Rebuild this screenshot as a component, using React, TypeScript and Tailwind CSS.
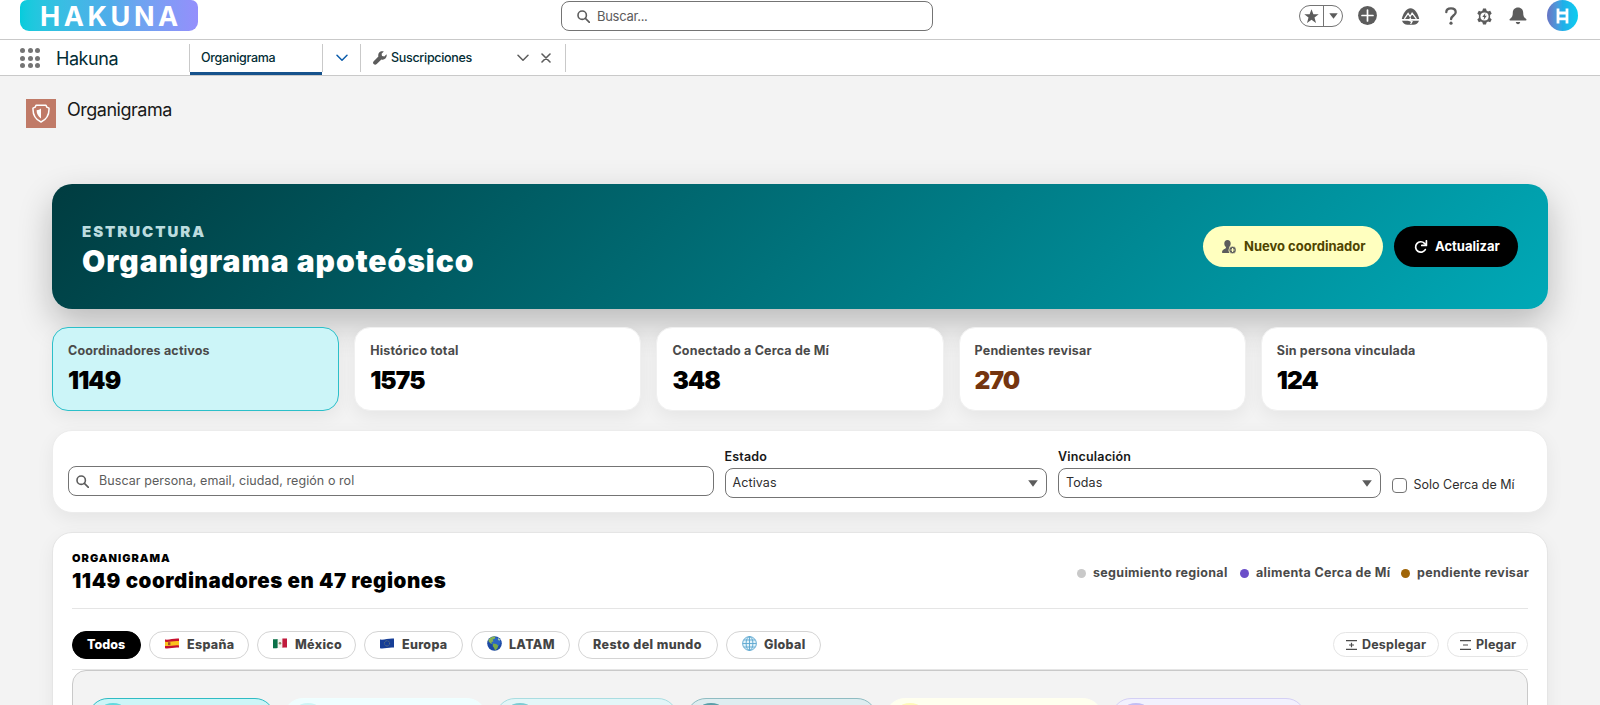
import type { ReactNode } from 'react';
import clsx from 'clsx';

const stats = [
    { label: 'Coordinadores activos', value: '1149', active: true },
    { label: 'Histórico total', value: '1575' },
    { label: 'Conectado a Cerca de Mí', value: '348' },
    { label: 'Pendientes revisar', value: '270', warn: true },
    { label: 'Sin persona vinculada', value: '124' },
];

const legend = [
    { label: 'seguimiento regional', dot: 'bg-[#c9c9c9]', width: 'w-[135px]' },
    { label: 'alimenta Cerca de Mí', dot: 'bg-[#6b4fc9]', width: 'w-[133px]' },
    { label: 'pendiente revisar', dot: 'bg-[#a06508]', width: 'w-[111px]' },
];

const people = [
    { card: 'w-[187px] border-[#2fbcc4] bg-[#ccf5f7]', avatar: 'bg-[#62d9de]' },
    { card: 'w-[204px] border-[#f0ffff] bg-[#effeff]', avatar: 'bg-[#cdf5f6]' },
    { card: 'w-[183px] border-[#a9dde1] bg-[#e3f6f8]', avatar: 'bg-[#7ccbd3]' },
    { card: 'w-[191px] border-[#8fbcc2] bg-[#deedf0]', avatar: 'bg-[#5a9ea8]' },
    { card: 'w-[218px] border-[#fffff0] bg-[#ffffee]', avatar: 'bg-[#fff9b8]' },
    { card: 'w-[195px] border-[#d4d0f5] bg-[#f2f1fe]', avatar: 'bg-[#c3bdf3]' },
];

function SearchIcon({ className }: { className?: string }) {
    return (
        <svg className={className} width="13" height="13" viewBox="0 0 13 13" fill="none" stroke="#5c5c5c" strokeWidth="1.6">
            <circle cx="5.2" cy="5.2" r="4.2" />
            <path d="M8.4 8.4l4 4" strokeLinecap="round" />
        </svg>
    );
}

function Chevron({ color }: { color: string }) {
    return (
        <svg width="12" height="8" viewBox="0 0 12 8" fill="none" stroke={color} strokeWidth="1.5">
            <path d="M1 1.3l5 5 5-5" strokeLinecap="round" strokeLinejoin="round" />
        </svg>
    );
}

function FlagSpain() {
    return (
        <svg width="14" height="11" viewBox="0 0 14 11">
            <path d="M0 1.5C4 2.2 9 0 14 .6v9C9 9 4 11 0 10.2z" fill="#c8102e" />
            <path d="M0 3.8C4 4.4 9 2.4 14 3v4.4C9 6.8 4 8.6 0 8z" fill="#fbc21c" />
            <path d="M3 4.2h2.4v3H3z" fill="#a8492a" />
        </svg>
    );
}

function FlagMexico() {
    return (
        <svg width="14" height="11" viewBox="0 0 14 11">
            <path d="M0 1.2C4 1.8 9 0 14 .6v9C9 9 4 11 0 10.2z" fill="#f4f2ee" />
            <path d="M0 1.2c1.6.2 3 .1 4.6-.2v9.1c-1.6.2-3 .3-4.6.1z" fill="#0b7048" />
            <path d="M9.4.5C11 .3 12.5.4 14 .6v9c-1.5-.2-3-.1-4.6.1z" fill="#c01a3c" />
            <circle cx="7" cy="5.3" r="1.3" fill="#8a8460" />
        </svg>
    );
}

function FlagEurope() {
    return (
        <svg width="14" height="11" viewBox="0 0 14 11">
            <path d="M0 1.5C4 2.2 9 0 14 .6v9C9 9 4 11 0 10.2z" fill="#173e96" />
            <circle cx="7" cy="5.4" r="2.6" fill="none" stroke="#7f8a6c" strokeWidth=".8" strokeDasharray=".8 .6" />
        </svg>
    );
}

function EarthIcon() {
    return (
        <svg width="15" height="15" viewBox="0 0 15 15">
            <circle cx="7.5" cy="7.5" r="7.3" fill="#1c49a3" />
            <circle cx="9" cy="6" r="4.5" fill="#2c66c4" />
            <path d="M2 3.3C3.6 1.2 6 .3 8.5.7l-.8 2.1-2 .8.7 1.9-2 .6.8 1.7-1.7-.3L1.3 5z" fill="#86b354" />
            <path d="M6.2 7.6l3.1.4 2.1 1.7-1.1 2.7-2.2 2-1-2.5-1.4-2z" fill="#79a84a" />
            <path d="M11.2 2l2 1.7-.9 1-1.3-1z" fill="#b8d89c" />
        </svg>
    );
}

function GlobeIcon() {
    return (
        <svg width="15" height="15" viewBox="0 0 15 15" fill="none" stroke="#5aa6cf" strokeWidth=".9">
            <circle cx="7.5" cy="7.5" r="6.9" fill="#e3f3fa" />
            <ellipse cx="7.5" cy="7.5" rx="3.4" ry="6.9" />
            <path d="M7.5.6v13.8M.6 7.5h13.8M1.8 4h11.4M1.8 11h11.4" />
        </svg>
    );
}

const regions: { label: string; icon?: ReactNode; active?: boolean; width: string }[] = [
    { label: 'Todos', active: true, width: 'w-[69px] pl-[14px]' },
    { label: 'España', icon: <FlagSpain />, width: 'w-[100px] pl-[15px]' },
    { label: 'México', icon: <FlagMexico />, width: 'w-[99px] pl-[15px]' },
    { label: 'Europa', icon: <FlagEurope />, width: 'w-[99px] pl-[15px]' },
    { label: 'LATAM', icon: <EarthIcon />, width: 'w-[99px] pl-[15px]' },
    { label: 'Resto del mundo', width: 'w-[140px] pl-[14px] tracking-[0.4px]' },
    { label: 'Global', icon: <GlobeIcon />, width: 'w-[95px] pl-[15px]' },
];

function TopBar() {
    return (
        <div className="flex h-10 items-start border-b border-[#c9c9c9] bg-white">
            <div className="ml-5 flex h-[31px] w-[178px] items-center rounded-b-[9px] rounded-t-[7px] bg-linear-to-r from-[#04ccdc] via-[#4fadea] to-[#948ffc] pt-px pl-5">
                <span className="text-[27px] leading-none font-bold tracking-[3.6px] text-white">HAKUNA</span>
            </div>

            <div className="mt-px ml-[363px] flex h-[30px] w-[372px] items-center rounded-lg border border-[#747474] pl-[15px]">
                <SearchIcon className="mt-px" />
                <span className="ml-[7px] pt-px text-[13px] tracking-[-0.3px] text-[#5c5c5c]">Buscar...</span>
            </div>

            <div className="ml-[366px] flex h-8 items-center">
                <div className="flex h-[22px] w-11 items-center rounded-full border border-[#747474]">
                    <div className="flex h-full w-6 items-center justify-center border-r border-[#747474]">
                        <svg width="15" height="15" viewBox="0 0 15 15" fill="#5c5c5c">
                            <path d="M7.5.3l1.9 5h5.3l-4.2 3.3 1.5 5.3-4.5-3.2-4.5 3.2 1.5-5.3L.3 5.3h5.3z" />
                        </svg>
                    </div>
                    <svg className="ml-[5px]" width="9" height="6" viewBox="0 0 9 6" fill="#5c5c5c">
                        <path d="M.3.3h8.4L4.5 5.7z" />
                    </svg>
                </div>

                {/* crear */}
                <svg className="-mt-[2px] ml-[15px]" width="19" height="19" viewBox="0 0 19 19">
                    <circle cx="9.5" cy="9.5" r="9.4" fill="#5c5c5c" />
                    <path d="M9.5 4v11M4 9.5h11" stroke="#fff" strokeWidth="1.7" strokeLinecap="round" />
                </svg>

                {/* trailhead */}
                <svg className="ml-6" width="19" height="17" viewBox="0 0 19 17">
                    <path d="M.8 11C1.8 6 5.200.3 9.500.3S17.200 6 18.200 11z" fill="#5c5c5c" />
                    <path d="M1 12.800h17c-1 2.600-3 3.900-5.500 3.900h-6C4 16.700 2 15.400 1 12.800z" fill="#5c5c5c" />
                    <path d="M3.400 10.800l3.700-5.300 2 3 2-3.300 4.300 5.600M9.800 9.800l-1.800 2.400 3 1.400-1.400 2.400" fill="none" stroke="#fff" strokeWidth="1.300" />
                </svg>

                {/* ayuda */}
                <svg className="ml-[25px]" width="12" height="18" viewBox="0 0 12 18">
                    <path d="M1.300 5.200C1.300 2.700 3.300 1.300 6 1.300s4.700 1.500 4.700 3.900c0 3.300-4.600 3.400-4.600 7" fill="none" stroke="#5c5c5c" strokeWidth="2.300" strokeLinecap="round" />
                    <circle cx="6" cy="16.200" r="1.600" fill="#5c5c5c" />
                </svg>

                {/* configuración */}
                <svg className="ml-[19px] mt-px" width="17" height="17" viewBox="0 0 17 17">
                    <path
                        d="M7 .4h3l.5 2.200 1.500.9 2.200-.7 1.500 2.600-1.600 1.500v3.200l1.600 1.500-1.500 2.600-2.200-.7-1.500.9-.5 2.200H7l-.5-2.200-1.500-.9-2.200.7-1.500-2.600 1.600-1.500V6.900L1.300 5.400l1.500-2.600 2.200.7 1.500-.9z"
                        fill="#5c5c5c"
                    />
                    <circle cx="8.500" cy="8.500" r="4.100" fill="#fff" />
                    <path d="M9.400 5L6.300 9.100h1.900L7.600 12l3.200-4.200H8.900z" fill="#5c5c5c" />
                </svg>

                {/* notificaciones */}
                <svg className="ml-4" width="18" height="18" viewBox="0 0 18 18" fill="#5c5c5c">
                    <path d="M9 .5c3.300 0 5.200 2.300 5.200 5.200 0 3.200.7 4.800 2.900 6.200.8.600.5 1.600-.4 1.600H1.300c-.9 0-1.200-1-.4-1.600 2.200-1.400 2.900-3 2.900-6.200C3.800 2.800 5.700.5 9 .5z" />
                    <path d="M6.800 15h4.400c-.2 1.400-1 2.200-2.200 2.200S7 16.400 6.800 15z" />
                </svg>

                <div className="-mt-px ml-5 flex size-[31px] items-center justify-center rounded-full bg-linear-to-r from-[#6674c4] via-[#20aee8] to-[#08cdf0]">
                    <svg width="13" height="16" viewBox="0 0 13 16" stroke="#fff" strokeWidth="2.800" fill="none">
                        <path d="M2 .5v15M11 .5v15M2 5h9M2 10.800h9" />
                    </svg>
                </div>
            </div>
        </div>
    );
}

function TabBar() {
    return (
        <div className="flex h-9 items-start border-b border-[#c9c9c9] bg-white text-[#03234d]">
            <div className="mt-2 ml-5 grid w-5 grid-cols-3 gap-[2.5px]">
                {Array.from({ length: 9 }, (_, i) => (
                    <span key={i} className="size-[5px] rounded-full bg-[#747474]" />
                ))}
            </div>
            <span className="mt-1.5 ml-4 w-[133px] text-[18px] leading-[26px] tracking-[-0.45px] text-[#032d35]">
                Hakuna
            </span>

            <div className="mt-1 h-[30px] w-[134px]">
                <div className="flex h-7 items-center border-x border-[#c9c9c9] pl-[11px]">
                    <span className="pt-px text-[12.5px] font-medium tracking-[-0.28px] text-[#032d35]">Organigrama</span>
                </div>
                <div className="mx-px h-[2.5px] bg-[#16528c]" />
            </div>
            <div className="mt-1 flex h-[28px] w-[38px] items-center justify-center border-r border-[#c9c9c9]">
                <Chevron color="#0b5cab" />
            </div>

            <div className="mt-1 flex h-[28px] w-[205px] items-center border-r border-[#c9c9c9] pl-3">
                <svg width="14" height="14" viewBox="0 0 14 14" fill="#5c5c5c">
                    <path d="M13.500 3.200L11.300 5.400 9 5 8.600 2.700 10.800.5C9.200-.1 7.300.2 6.200 1.500c-1 1.200-1.200 2.600-.8 3.900L.7 10.200c-.9.900-.9 2 0 2.900s2.100.9 3 0l4.700-4.700c1.400.5 2.900.2 4-.9 1.200-1.200 1.600-2.800 1.100-4.300z" />
                </svg>
                <span className="ml-1 pt-px text-[12.5px] font-medium tracking-[-0.3px] text-[#032d35]">Suscripciones</span>
                <div className="mr-[14px] ml-auto flex items-center gap-[12px]">
                    <Chevron color="#5c5c5c" />
                    <svg width="10" height="10" viewBox="0 0 10 10" stroke="#5c5c5c" strokeWidth="1.600" strokeLinecap="round">
                        <path d="M1 1l8 8M9 1L1 9" />
                    </svg>
                </div>
            </div>
        </div>
    );
}

function Hero() {
    return (
        <section className="flex h-[125px] items-center justify-between rounded-[20px] bg-[linear-gradient(135deg,#003c40_0%,#00a9b7_100%)] px-[30px] shadow-[0_14px_34px_rgba(0,0,0,0.24)]">
            <div className="pt-[8px]">
                <p className="text-[15px] leading-[18px] font-black tracking-[1.950px] text-[#bcdcdf]">ESTRUCTURA</p>
                <h1 className="mt-[2px] text-[30px] leading-[36px] font-black tracking-[0.990px] text-white">
                    Organigrama apoteósico
                </h1>
            </div>
            <div className="flex gap-[11px] text-[13px] font-bold">
                <button className="flex h-[41px] w-[180px] items-center rounded-full bg-[#ffffbf] pl-[19px] text-[#4f4400]">
                    <svg width="14" height="14" viewBox="0 0 14 14">
                        <path d="M5.500 0C7.500 0 8.700 1.500 8.700 3.400c0 1.400-.6 2.600-1.300 3.300-.3.500-.1 1 .3 1.200-1.200 1.400-1.300 3.500-.3 5.100H1C.3 13 0 12.600 0 12c0-2.300 2.200-2.800 3.500-3.600.6-.4.6-1.200.2-1.700C2.900 6 2.300 4.800 2.300 3.400 2.300 1.500 3.500 0 5.500 0z" fill="#5c5c5c" />
                        <circle cx="10.600" cy="10" r="3.700" fill="#5c5c5c" stroke="#ffffbf" strokeWidth=".7" />
                        <path d="M10.600 8v4M8.600 10h4" stroke="#ffffbf" strokeWidth="1.200" />
                    </svg>
                    <span className="ml-2">Nuevo coordinador</span>
                </button>
                <button className="flex h-[41px] w-[124px] items-center rounded-full bg-black pl-5 text-white">
                    <svg width="14" height="14" viewBox="0 0 14 14" fill="none" stroke="#fff" strokeWidth="1.700">
                        <path d="M11.300 9.600A5.200 5.200 0 1 1 10.500 3.300l1.300 1.300" strokeLinecap="round" />
                        <path d="M12.400.8v4.600H7.800" strokeLinecap="round" strokeLinejoin="round" />
                    </svg>
                    <span className="ml-[7px]">Actualizar</span>
                </button>
            </div>
        </section>
    );
}

function Filters() {
    return (
        <section className="mt-[19px] flex h-[83px] rounded-[20px] border border-[#ececec] bg-white pl-[15px] text-[12.5px] text-[#2e2e2e] shadow-[0_6px_18px_rgba(0,0,0,0.06)]">
            <div className="mt-[35px] flex h-[30px] w-[645.5px] items-center rounded-lg border border-[#747474] pl-[7px]">
                <SearchIcon />
                <span className="ml-[10px] text-[12.5px] tracking-[0.07px] text-[#5c5c5c]">
                    Buscar persona, email, ciudad, región o rol
                </span>
            </div>
            <Select label="Estado" value="Activas" />
            <Select label="Vinculación" value="Todas" />
            <div className="mt-[46px] ml-[11px] flex h-4 items-center">
                <span className="size-[15px] rounded-[4px] border border-[#747474]" />
                <span className="ml-[7px]">Solo Cerca de Mí</span>
            </div>
        </section>
    );
}

function Select({ label, value }: { label: string; value: string }) {
    return (
        <div className="ml-[11px] w-[322.5px] pt-[17px]">
            <div className="h-5 text-[12.5px] leading-[18px] font-semibold tracking-[0.18px] text-[#181818]">{label}</div>
            <div className="flex h-[30px] items-center justify-between rounded-lg border border-[#747474] pr-2 pl-[7px]">
                <span className="tracking-[0.1px]">{value}</span>
                <svg width="10" height="7" viewBox="0 0 10 7" fill="#5c5c5c">
                    <path d="M.2.300h9.600L5 6.700z" />
                </svg>
            </div>
        </div>
    );
}

function Chart() {
    return (
        <section className="mt-[19px] h-[220px] rounded-t-[20px] border border-[#e5e5e5] bg-white px-[19px] shadow-[0_6px_18px_rgba(0,0,0,0.06)]">
            <div className="flex h-[76px] items-start justify-between border-b border-[#e5e5e5]">
                <div className="pt-[18px]">
                    <p className="text-[11px] leading-[14px] font-black tracking-[1px] text-black">ORGANIGRAMA</p>
                    <h2 className="mt-[3px] text-[20.5px] leading-[26px] font-black tracking-[0.560px] text-black">
                        1149 coordinadores en 47 regiones
                    </h2>
                </div>
                <div className="mt-8 flex items-center gap-3 text-[12.5px] leading-4 font-bold tracking-[0.32px] text-[#4a4a4a]">
                    {legend.map((item) => (
                        <div key={item.label} className="flex items-center gap-[7px]">
                            <span className={clsx('size-[9px] rounded-full', item.dot)} />
                            <span className={clsx('whitespace-nowrap', item.width)}>{item.label}</span>
                        </div>
                    ))}
                </div>
            </div>

            <div className="flex h-[61px] items-center justify-between border-b border-[#e5e5e5] pt-[11px] text-[12.5px] text-[#444]">
                <div className="flex gap-2">
                    {regions.map((region) => (
                        <button
                            key={region.label}
                            className={clsx(
                                'flex h-7 shrink-0 items-center rounded-full border font-extrabold whitespace-nowrap',
                                region.width,
                                region.active ? 'border-black bg-black text-white' : 'border-[#d4d4d4] bg-white tracking-[0.3px]',
                            )}
                        >
                            {region.icon && <span className="-mt-[3px] flex w-[22px]">{region.icon}</span>}
                            <span className="pt-px">{region.label}</span>
                        </button>
                    ))}
                </div>
                <div className="flex gap-2 font-bold tracking-[0.2px]">
                    <button className="flex h-[25px] w-[106px] items-center rounded-full border border-[#e5e5e5] pl-3">
                        <svg width="11" height="10" viewBox="0 0 11 10" stroke="#4a4a4a" strokeWidth="1.200">
                            <path d="M0 .7h11M0 9.300h11M3 5h5M5.500 2.700v4.600" />
                        </svg>
                        <span className="ml-[5px] pt-px">Desplegar</span>
                    </button>
                    <button className="flex h-[25px] w-[81px] items-center rounded-full border border-[#e5e5e5] pl-3">
                        <svg width="11" height="10" viewBox="0 0 11 10" stroke="#4a4a4a" strokeWidth="1.200">
                            <path d="M0 .7h11M0 9.300h11M3 5h5" />
                        </svg>
                        <span className="ml-[5px] pt-px">Plegar</span>
                    </button>
                </div>
            </div>

            <div className="flex h-20 gap-2 rounded-t-[14px] border border-[#c9c9c9] bg-[#f3f3f3] px-[15px] pt-[27px]">
                {people.map((person) => (
                    <div key={person.card} className={clsx('h-12 rounded-[20px] border pt-1 pl-[6px]', person.card)}>
                        <div className={clsx('size-9 rounded-full', person.avatar)} />
                    </div>
                ))}
            </div>
        </section>
    );
}

export default function App() {
    return (
        <div className="h-[705px] w-[1600px] overflow-hidden bg-[#f3f3f3] font-['Inter','Liberation_Sans',sans-serif]">
            <TopBar />
            <TabBar />

            <div className="flex h-[108px] pt-[22px] pl-[26px]">
                <div className="mt-px flex h-[29px] w-[30px] items-center justify-center bg-[#c07a67]">
                    <svg width="18" height="19" viewBox="0 0 18 19" fill="none">
                        <path d="M4 1.300h10l.8 1.800 2.200 1c.3 6-2 11-8 13.900C3 15.100.7 10.100 1 4.100l2.200-1z" stroke="#fff" strokeWidth="1.500" strokeLinejoin="round" />
                        <path d="M9 4.500v10C6 12.500 4.600 9.600 4.600 6.300 6.400 6 7.600 5.500 9 4.500z" fill="#fff" />
                    </svg>
                </div>
                <h1 className="ml-[11px] text-[18px] leading-6 tracking-[-0.480px] text-[#181818]">Organigrama</h1>
            </div>

            <main className="mx-[52px]">
                <Hero />
                <div className="mt-[18px] grid grid-cols-5 gap-[15px]">
                    {stats.map((stat) => (
                        <div
                            key={stat.label}
                            className={clsx(
                                'h-[84px] rounded-2xl border pt-[14px] pl-[15px] shadow-[0_6px_18px_rgba(0,0,0,0.06)]',
                                stat.active ? 'border-[#2bbfc9] bg-[#ccf5f8]' : 'border-[#f0f0f0] bg-white',
                            )}
                        >
                            <div className="text-[12.5px] leading-[18px] font-bold tracking-[0.18px] text-[#4a4a4a]">{stat.label}</div>
                            <div
                                className={clsx(
                                    'mt-1 text-[24.5px] leading-8 font-black tracking-[-0.9px]',
                                    stat.warn ? 'text-[#75350f]' : 'text-black',
                                )}
                            >
                                {stat.value}
                            </div>
                        </div>
                    ))}
                </div>
                <Filters />
                <Chart />
            </main>
        </div>
    );
}
